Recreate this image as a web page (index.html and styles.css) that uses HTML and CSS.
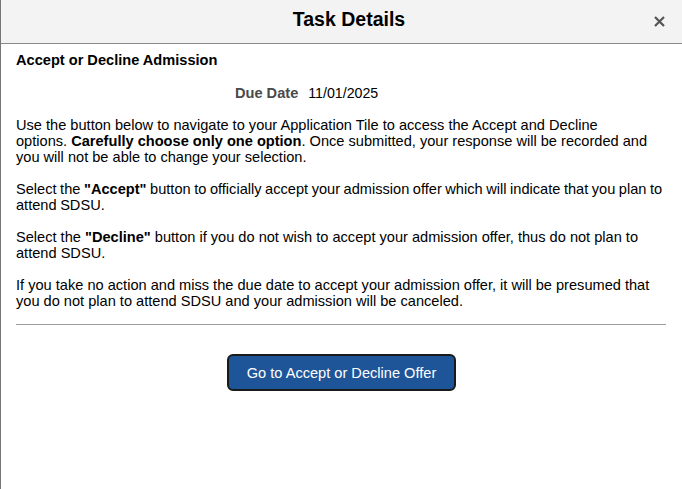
FILE: index.html
```html
<!DOCTYPE html>
<html lang="en">
  <head>
    <meta charset="UTF-8" />
    <title>Task Details</title>
    <link rel="stylesheet" href="styles.css">
  </head>
  <body>
    <div id="modal">
      <div class="modal-header">
        <h1 class="modal-title">Task Details</h1>
        <button class="close-button" aria-label="Close">
          <svg width="11" height="11" viewBox="0 0 11 11">
            <path d="M1 1 L10 10 M10 1 L1 10" stroke="#555" stroke-width="2.2" />
          </svg>
        </button>
      </div>
      <div class="modal-body">
        <h2 class="task-name">Accept or Decline Admission</h2>
        <div class="due-row">
          <span class="due-label">Due Date</span>
          <span class="due-value">11/01/2025</span>
        </div>
        <p>Use the button below to navigate to your Application Tile to access the Accept and Decline<br>options. <b>Carefully choose only one option</b>. Once submitted, your response will be recorded and you will not be able to change your selection.</p>
        <p class="tight">Select the <b>"Accept"</b> button to officially accept your admission offer which will indicate that you plan to attend SDSU.</p>
        <p>Select the <b>"Decline"</b> button if you do not wish to accept your admission offer, thus do not plan to attend SDSU.</p>
        <p>If you take no action and miss the due date to accept your admission offer, it will be presumed that you do not plan to attend SDSU and your admission will be canceled.</p>
        <hr class="divider" />
        <div class="action-row">
          <button class="offer-button">Go to Accept or Decline Offer</button>
        </div>
      </div>
    </div>
  </body>
</html>
```

FILE: styles.css
```css
html, body {
  height: 100%;
}

body {
  margin: 0;
  font-family: "Liberation Sans", Arial, sans-serif;
  font-size: 14.6px;
  color: #000;
  background-color: #fff;
}

#modal {
  min-height: 100%;
  border-left: 1px solid #767676;
  box-sizing: border-box;
}

.modal-header {
  height: 43px;
  padding-left: 15px;
  background-color: #f3f3f3;
  border-bottom: 1px solid #8a8a8a;
  display: flex;
  justify-content: center;
  align-items: center;
  position: relative;
}

.modal-title {
  margin: 0 0 5px 0;
  font-size: 19.5px;
  line-height: 24px;
  font-weight: bold;
}

.close-button {
  position: absolute;
  right: 17px;
  top: 16px;
  width: 11px;
  height: 11px;
  padding: 0;
  border: none;
  background: none;
  display: flex;
  cursor: pointer;
}

.modal-body {
  padding: 8px 16px 0 15px;
}

.task-name {
  margin: 0;
  font-size: 14.6px;
  line-height: 16px;
  font-weight: bold;
}

.due-row {
  margin-top: 17px;
  padding-left: 219px;
  display: flex;
  gap: 10px;
  line-height: 16px;
}

.due-label {
  font-weight: bold;
  color: #4a4a4a;
}

.due-value {
  font-size: 14.2px;
}

p {
  margin: 16px 0 0 0;
  line-height: 16px;
}

p.tight {
  word-spacing: -0.5px;
}

.divider {
  margin: 15px 0 0 0;
  border: none;
  border-top: 1px solid #9a9a9a;
  height: 0;
}

.action-row {
  display: flex;
  justify-content: center;
  padding-top: 29px;
  padding-left: 1px;
}

.offer-button {
  width: 229px;
  height: 37px;
  background-color: #1e5598;
  color: #fff;
  border: 2px solid #1a1a1a;
  border-radius: 6px;
  font-family: "Liberation Sans", Arial, sans-serif;
  font-size: 14.6px;
  cursor: pointer;
}
```
